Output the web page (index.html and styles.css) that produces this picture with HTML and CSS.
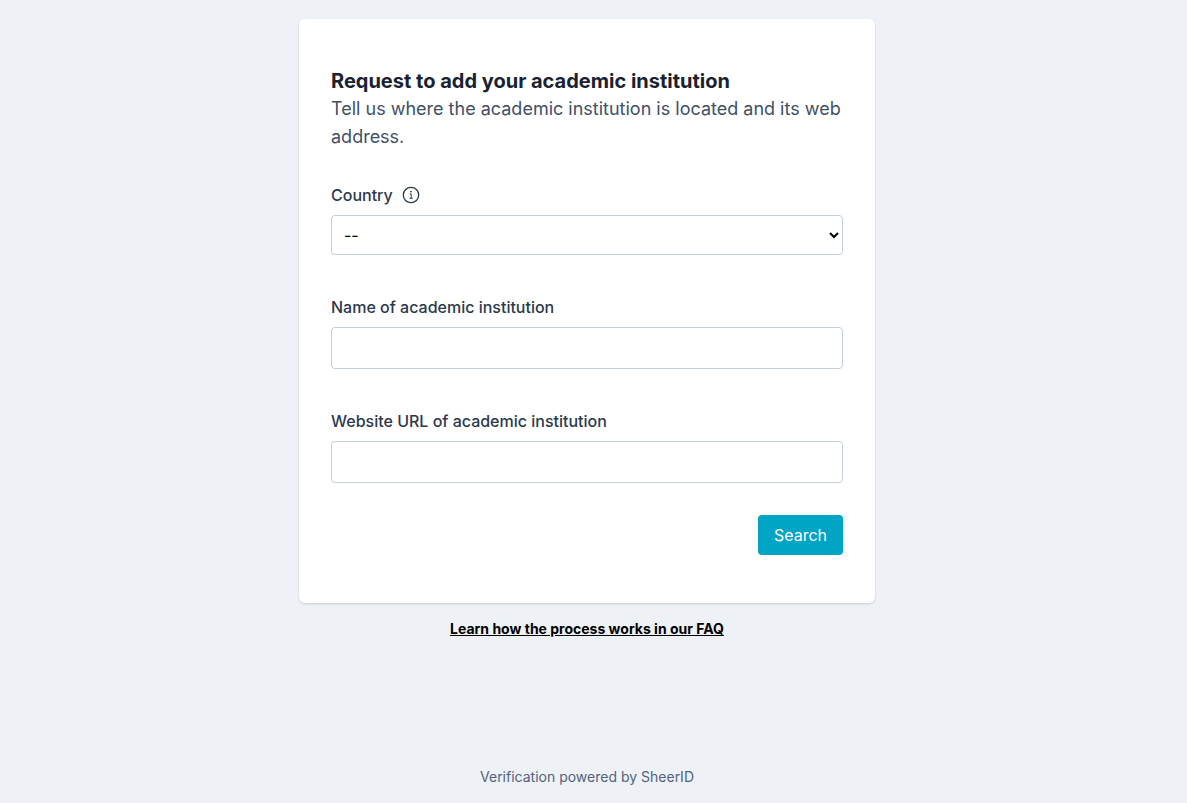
FILE: index.html
```html
<!DOCTYPE html>
<html lang="en">
  <head>
    <meta charset="UTF-8" />
    <meta name="viewport" content="width=device-width, initial-scale=1.0" />
    <title>Request to add your academic institution</title>
    <link rel="stylesheet" href="styles.css">
  </head>
  <body>
    <main class="page">
      <div class="card">
        <h1 class="title">Request to add your academic institution</h1>
        <p class="subtitle">Tell us where the academic institution is located and its web address.</p>
        <form>
          <div class="field">
            <div class="label-row">
              <label for="country">Country</label>
              <button type="button" class="info" aria-label="More information">
                <svg width="18" height="18" viewBox="0 0 18 18" fill="none" stroke="currentColor">
                  <circle cx="9" cy="9" r="7.7" stroke-width="1.3" />
                  <path d="M7.7 7.9h1.5v4.3M7.5 12.3h3.2" stroke-width="1" />
                  <circle cx="9" cy="5.6" r="0.9" fill="currentColor" stroke="none" />
                </svg>
              </button>
            </div>
            <select id="country">
              <option>--</option>
            </select>
          </div>

          <div class="field">
            <label for="name">Name of academic institution</label>
            <input type="text" id="name" />
          </div>

          <div class="field">
            <label for="website">Website URL of academic institution</label>
            <input type="text" id="website" />
          </div>

          <div class="actions">
            <button type="submit" class="search">Search</button>
          </div>
        </form>
      </div>
      <a class="faq" href="#">Learn how the process works in our FAQ</a>
    </main>
    <footer class="footer">Verification powered by SheerID</footer>
  </body>
</html>
```

FILE: styles.css
```css
* {
  box-sizing: border-box;
}
body {
  margin: 0;
  padding-right: 13px;
  min-height: 100vh;
  display: flex;
  flex-direction: column;
  background-color: #eef1f6;
  color: #2b394b;
  font-family: Inter, sans-serif;
  font-size: 16px;
  line-height: 24px;
}
.page {
  flex: 1;
  display: flex;
  flex-direction: column;
  align-items: center;
  padding-top: 19px;
}
.card {
  width: 100%;
  max-width: 576px;
  padding: 48px 32px;
  background: #fff;
  border-radius: 6px;
  box-shadow: 0 1px 3px rgba(0, 0, 0, 0.1), 0 1px 2px rgba(0, 0, 0, 0.06);
}
.title {
  margin: 0;
  color: #182230;
  font-size: 20px;
  font-weight: 700;
  line-height: 28px;
}
.subtitle {
  margin: 0 0 32px;
  color: #415066;
  font-size: 18px;
  line-height: 28px;
}
.field + .field {
  margin-top: 40px;
}
label {
  display: block;
  font-weight: 500;
}
.label-row {
  display: flex;
  align-items: center;
  gap: 9px;
}
.info {
  display: flex;
  padding: 0;
  border: none;
  background: none;
  color: #2b394b;
  cursor: pointer;
}
input,
select {
  display: block;
  width: 100%;
  height: 42px;
  margin-top: 8px;
  padding: 8px 12px;
  border: 1px solid #c3cfde;
  border-radius: 4px;
  background-color: #fff;
  color: #000;
  font: inherit;
}
select {
  height: 40px;
  padding: 0 8px;
}
.actions {
  display: flex;
  justify-content: flex-end;
  margin-top: 32px;
}
.search {
  height: 40px;
  padding: 8px 16px;
  border: none;
  border-radius: 4px;
  background-color: #00a4c4;
  color: #fff;
  font: inherit;
  cursor: pointer;
}
.faq {
  margin-top: 16px;
  color: #000;
  font-size: 14px;
  font-weight: 700;
  line-height: 20px;
}
.footer {
  padding: 16px;
  color: #52647d;
  font-size: 14px;
  line-height: 20px;
  text-align: center;
}
```
